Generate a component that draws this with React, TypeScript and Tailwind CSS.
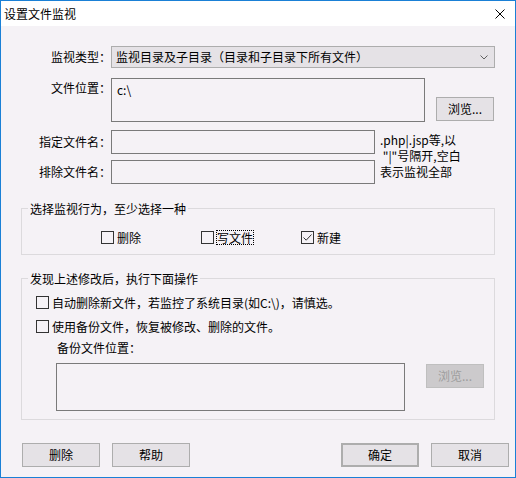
import React from "react";

function Check({ checked }: { checked?: boolean }) {
  return (
    <span className="w-[13px] h-[13px] border border-[#333333] bg-[#f5f2f6] flex items-center justify-center shrink-0">
      {checked && (
        <svg width="11" height="11" viewBox="0 0 11 11">
          <path d="M1.5 5.5 L4.2 8.2 L9.5 2.5" stroke="#333333" strokeWidth="1" fill="none" />
        </svg>
      )}
    </span>
  );
}

function Btn({
  children,
  className = "",
}: {
  children: React.ReactNode;
  className?: string;
}) {
  return (
    <div
      className={
        "w-[78px] h-[24px] border border-[#adadad] bg-[#e5e2e6] flex items-center justify-center leading-[16px] " +
        className
      }
    >
      {children}
    </div>
  );
}

export default function App() {
  return (
    <div className="w-[516px] h-[478px] border border-[#1a80d6] bg-[#f5f2f6] flex flex-col text-[12px] leading-[16px] text-black font-['Noto_Sans_CJK_SC',sans-serif] overflow-hidden">
      {/* title bar */}
      <div className="h-[25px] bg-white flex items-center justify-between pl-[3px] pr-[10px] shrink-0">
        <span>设置文件监视</span>
        <svg width="10" height="10" viewBox="0 0 10 10">
          <path d="M0.5 0.5 L9.5 9.5 M9.5 0.5 L0.5 9.5" stroke="#000" strokeWidth="1" />
        </svg>
      </div>

      {/* 监视类型 */}
      <div className="flex items-center mt-[20px]">
        <div className="w-[110px] text-right">监视类型：</div>
        <div className="w-[384px] h-[22px] border border-[#adadad] bg-[#e5e2e6] flex items-center justify-between pl-[4px] pr-[6px]">
          <span>监视目录及子目录（目录和子目录下所有文件）</span>
          <svg width="8" height="5" viewBox="0 0 8 5">
            <path d="M0.5 0.5 L4 4 L7.5 0.5" stroke="#606060" strokeWidth="1" fill="none" />
          </svg>
        </div>
      </div>

      {/* 文件位置 */}
      <div className="flex items-start mt-[10px]">
        <div className="w-[110px] text-right pt-[2px]">文件位置：</div>
        <div className="w-[314px] h-[44px] border border-[#7a7a7a] bg-[#f5f2f6] pl-[5px] pt-[3px]">c:\</div>
        <div className="ml-[11px] mt-[19px] w-[58px] h-[24px] border border-[#adadad] bg-[#e5e2e6] flex items-center justify-center">
          浏览...
        </div>
      </div>

      {/* 指定 / 排除 */}
      <div className="flex mt-[8px]">
        <div className="flex flex-col gap-[6px]">
          <div className="flex items-center h-[24px]">
            <div className="w-[110px] text-right">指定文件名：</div>
            <div className="w-[264px] h-[24px] border border-[#7a7a7a] bg-[#f5f2f6]" />
          </div>
          <div className="flex items-center h-[24px]">
            <div className="w-[110px] text-right">排除文件名：</div>
            <div className="w-[264px] h-[24px] border border-[#7a7a7a] bg-[#f5f2f6]" />
          </div>
        </div>
        <div className="ml-[5px] pt-[2px] leading-[16px] whitespace-pre">
          {".php|.jsp等,以\n \"|\"号隔开,空白\n表示监视全部"}
        </div>
      </div>

      {/* group 1 */}
      <fieldset className="ml-[20px] w-[474px] h-[55px] mt-[16px] border border-[#dcdadd]">
        <legend className="ml-[6px] px-[2px] leading-[17px]">选择监视行为，至少选择一种</legend>
        <div className="flex mt-[14px] ml-[79px] h-[13px] items-center">
          <div className="w-[100px] flex items-center">
            <Check />
            <span className="ml-[3px]">删除</span>
          </div>
          <div className="w-[100px] flex items-center">
            <Check />
            <span className="ml-[2px] border border-dotted border-black leading-[13px]">写文件</span>
          </div>
          <div className="w-[100px] flex items-center">
            <Check checked />
            <span className="ml-[3px]">新建</span>
          </div>
        </div>
      </fieldset>

      {/* group 2 */}
      <fieldset className="ml-[20px] w-[474px] h-[150px] mt-[15px] border border-[#dcdadd]">
        <legend className="ml-[6px] px-[2px] leading-[17px]">发现上述修改后，执行下面操作</legend>
        <div className="flex items-center h-[13px] mt-[9px] ml-[14px]">
          <Check />
          <span className="ml-[3px]">自动删除新文件，若监控了系统目录(如C:\)，请慎选。</span>
        </div>
        <div className="flex items-center h-[13px] mt-[11px] ml-[14px]">
          <Check />
          <span className="ml-[3px]">使用备份文件，恢复被修改、删除的文件。</span>
        </div>
        <div className="mt-[7px] ml-[35px]">备份文件位置：</div>
        <div className="flex items-start mt-[7px] ml-[34px]">
          <div className="w-[349px] h-[48px] border border-[#7a7a7a] bg-[#f5f2f6]" />
          <div className="ml-[21px] mt-[1px] w-[58px] h-[24px] border border-[#bfbfbf] bg-[#cccacc] text-[#9d9d9d] flex items-center justify-center">
            浏览...
          </div>
        </div>
      </fieldset>

      {/* bottom buttons */}
      <div className="flex items-center mt-[23px] pl-[21px] pr-[6px]">
        <Btn>删除</Btn>
        <Btn className="ml-[12px]">帮助</Btn>
        <div className="flex-1" />
        <Btn className="border-2 border-[#0078d7]">确定</Btn>
        <Btn className="ml-[12px]">取消</Btn>
      </div>
    </div>
  );
}
